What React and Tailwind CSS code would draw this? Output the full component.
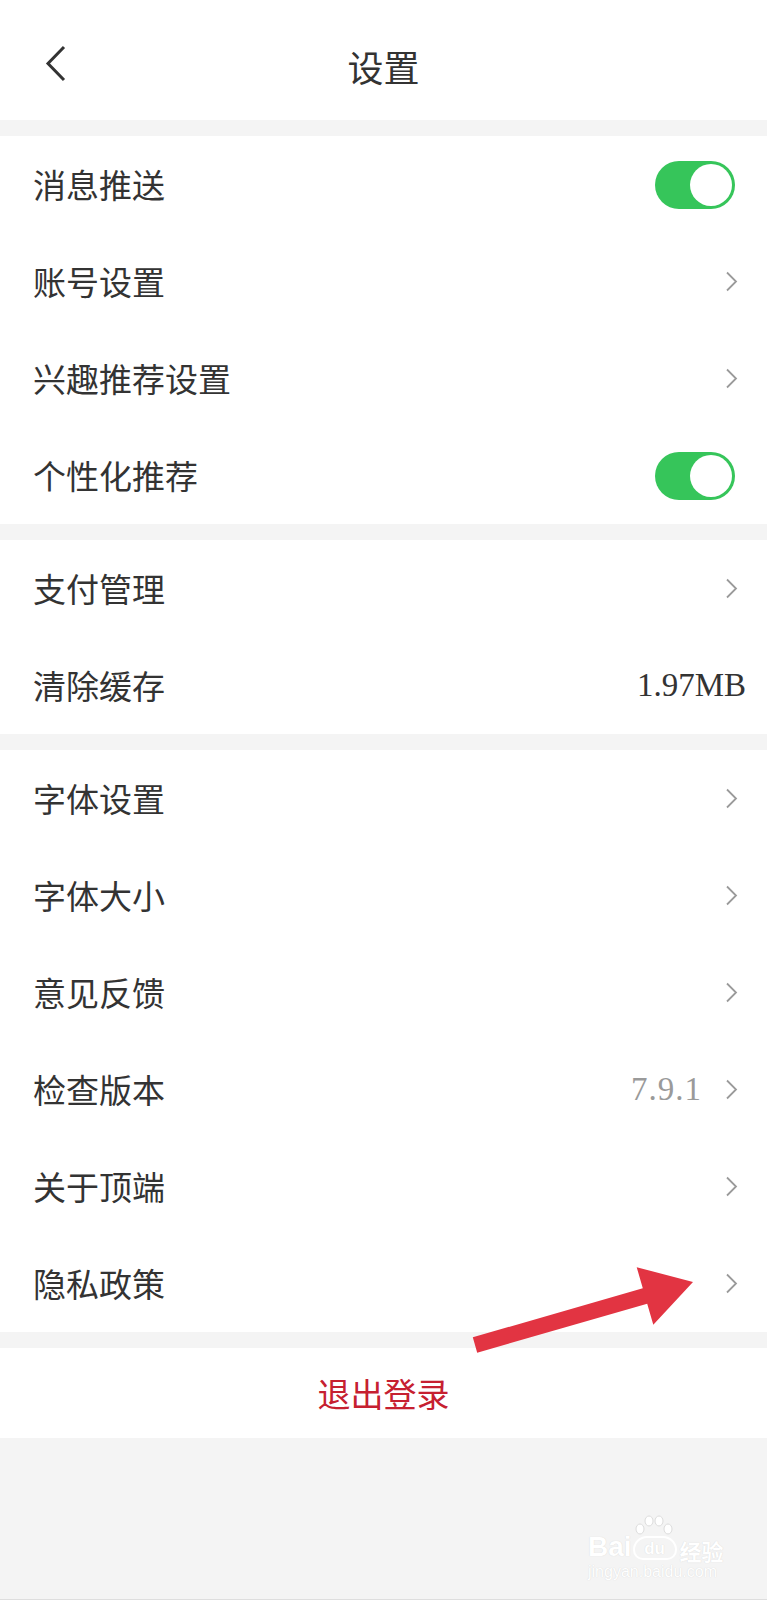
import React from 'react';

const sans = { fontFamily: '"Noto Sans CJK SC", "Noto Sans", sans-serif' };

const sections = [
  [
    { label: '消息推送', kind: 'toggle' },
    { label: '账号设置', kind: 'arrow' },
    { label: '兴趣推荐设置', kind: 'arrow' },
    { label: '个性化推荐', kind: 'toggle' },
  ],
  [
    { label: '支付管理', kind: 'arrow' },
    { label: '清除缓存', kind: 'value', value: '1.97MB' },
  ],
  [
    { label: '字体设置', kind: 'arrow' },
    { label: '字体大小', kind: 'arrow' },
    { label: '意见反馈', kind: 'arrow' },
    { label: '检查版本', kind: 'arrow', value: '7.9.1' },
    { label: '关于顶端', kind: 'arrow' },
    { label: '隐私政策', kind: 'arrow' },
  ],
];

function Chevron() {
  return (
    <svg width="13" height="21" viewBox="0 0 13 21" className="shrink-0">
      <polyline points="2,1.5 11,10.5 2,19.5" fill="none" stroke="#9a9a9a" strokeWidth="1.8" />
    </svg>
  );
}

function Toggle() {
  return (
    <div className="flex h-[48px] w-[80px] items-center justify-end rounded-full bg-[#36c55a] pr-[3px]">
      <div className="h-[42px] w-[42px] rounded-full bg-white" />
    </div>
  );
}

function Row({ item }) {
  return (
    <div className="flex h-[97px] items-center justify-between pl-[33px]">
      <span className="text-[33px] leading-none text-[#333333]">{item.label}</span>
      {item.kind === 'toggle' ? (
        <div className="pr-[32px]">
          <Toggle />
        </div>
      ) : item.kind === 'value' ? (
        <span className="pr-[21px] text-[33px] leading-none text-[#333333] [font-family:'Liberation_Serif',serif]">
          {item.value}
        </span>
      ) : (
        <div className="flex items-center gap-[23px] pr-[29px]">
          {item.value ? (
            <span className="text-[33px] leading-none tracking-[1px] text-[#9a9a9a] [font-family:'Liberation_Serif',serif]">
              {item.value}
            </span>
          ) : null}
          <Chevron />
        </div>
      )}
    </div>
  );
}

function Watermark() {
  return (
    <div className="pointer-events-none absolute left-[588px] top-[1515px] flex w-[136px] flex-col text-white [text-shadow:0_0_1px_#d0d0d0]">
      <svg width="44" height="20" viewBox="0 0 44 20" className="ml-[44px]">
        <g fill="#ffffff" stroke="#dcdcdc" strokeWidth="1">
          <ellipse cx="8" cy="14" rx="4" ry="5" />
          <ellipse cx="17" cy="6" rx="4" ry="5" />
          <ellipse cx="27" cy="6" rx="4" ry="5" />
          <ellipse cx="36" cy="14" rx="4" ry="5" />
        </g>
      </svg>
      <div className="-mt-[2px] flex items-end gap-[1px] leading-none">
        <span className="text-[28px] font-bold [font-family:'Liberation_Sans',sans-serif]">Bai</span>
        <span className="mb-[1px] flex h-[24px] w-[44px] items-center justify-center rounded-t-[14px] rounded-b-[10px] border-2 border-white text-[17px] font-bold [font-family:'Liberation_Sans',sans-serif]">
          du
        </span>
        <span className="ml-[2px] text-[22px] font-bold">经验</span>
      </div>
      <span className="mt-[3px] text-[16px] leading-none [font-family:'Liberation_Sans',sans-serif]">jingyan.baidu.com</span>
    </div>
  );
}

export default function App() {
  return (
    <div className="relative flex min-h-[1600px] w-[767px] flex-col bg-[#f4f4f4]" style={sans}>
      <div className="relative flex h-[120px] items-center justify-center bg-white pt-[12px]">
        <svg width="22" height="38" viewBox="0 0 22 38" className="absolute left-[45px] top-[45px]">
          <polyline points="19,2 3,18.5 19,35" fill="none" stroke="#333333" strokeWidth="3" />
        </svg>
        <span className="text-[36px] leading-none text-[#333333]">设置</span>
      </div>

      {sections.map((rows, i) => (
        <div key={i} className="mt-[16px] bg-white">
          {rows.map((item) => (
            <Row key={item.label} item={item} />
          ))}
        </div>
      ))}

      <div className="mt-[16px] flex h-[90px] items-center justify-center bg-white">
        <span className="text-[33px] leading-none text-[#c62030]">退出登录</span>
      </div>

      <div className="flex-1" />
      <div className="h-px bg-[#dedede]" />

      <Watermark />

      {/* annotation arrow */}
      <svg className="pointer-events-none absolute left-0 top-0" width="767" height="1600" viewBox="0 0 767 1600">
        <polygon
          points="472.8,1337.3 642.8,1288.3 636.7,1267.2 693,1282 653.3,1324.8 647.2,1303.7 477.2,1352.7"
          fill="#e23442"
        />
      </svg>
    </div>
  );
}
